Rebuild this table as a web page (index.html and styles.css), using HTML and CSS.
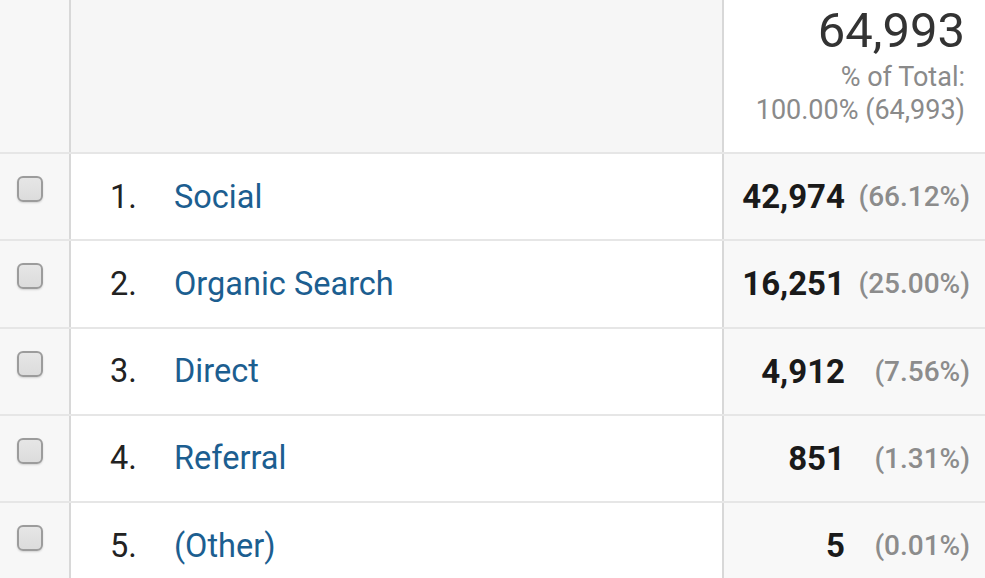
FILE: index.html
```html
<!DOCTYPE html>
<html lang="en">
<head>
    <meta charset="UTF-8">
    <meta name="viewport" content="width=device-width, initial-scale=1.0">
    <title>Channels</title>
    <link rel="stylesheet" href="styles.css">
</head>
<body>
    <div class="report">
        <div class="row head">
            <div class="cell check"></div>
            <div class="cell dim"></div>
            <div class="cell metric">
                <div class="total">64,993</div>
                <div class="total-sub">% of Total:<br>100.00% (64,993)</div>
            </div>
        </div>

        <div class="row">
            <div class="cell check"><span class="box"></span></div>
            <div class="cell dim"><span class="num">1.</span><a href="#" class="link">Social</a></div>
            <div class="cell metric"><span class="value">42,974</span><span class="pct">(66.12%)</span></div>
        </div>

        <div class="row">
            <div class="cell check"><span class="box"></span></div>
            <div class="cell dim"><span class="num">2.</span><a href="#" class="link">Organic Search</a></div>
            <div class="cell metric"><span class="value">16,251</span><span class="pct">(25.00%)</span></div>
        </div>

        <div class="row">
            <div class="cell check"><span class="box"></span></div>
            <div class="cell dim"><span class="num">3.</span><a href="#" class="link">Direct</a></div>
            <div class="cell metric"><span class="value">4,912</span><span class="pct">(7.56%)</span></div>
        </div>

        <div class="row">
            <div class="cell check"><span class="box"></span></div>
            <div class="cell dim"><span class="num">4.</span><a href="#" class="link">Referral</a></div>
            <div class="cell metric"><span class="value">851</span><span class="pct">(1.31%)</span></div>
        </div>

        <div class="row">
            <div class="cell check"><span class="box"></span></div>
            <div class="cell dim"><span class="num">5.</span><a href="#" class="link">(Other)</a></div>
            <div class="cell metric"><span class="value">5</span><span class="pct">(0.01%)</span></div>
        </div>
    </div>
</body>
</html>
```

FILE: styles.css
```css
body {
    margin: 0;
    background-color: #fff;
    font-family: Roboto, 'Liberation Sans', sans-serif;
    overflow: hidden;
}
.report {
    width: 985px;
}
.row {
    display: grid;
    grid-template-columns: 71px 653px 1fr;
    height: 87.25px;
    border-bottom: 2px solid #e6e6e6;
    box-sizing: border-box;
}
.row.head {
    height: 154px;
}
.cell {
    box-sizing: border-box;
}
.check {
    border-right: 2px solid #d8d8d8;
    background-color: #f7f7f7;
    padding: 22px 0 0 17px;
}
.dim {
    border-right: 2px solid #d8d8d8;
    background-color: #fff;
    display: flex;
    align-items: center;
    padding-left: 39px;
    font-size: 32.5px;
}
.head .dim {
    background-color: #f6f6f6;
}
.metric {
    background-color: #f8f8f8;
    display: flex;
    align-items: center;
    justify-content: flex-end;
    padding-right: 15px;
}
.head .metric {
    background-color: #fff;
    display: block;
    text-align: right;
    padding: 6px 20px 0 0;
}
.total {
    font-size: 49px;
    line-height: 50px;
    color: #333;
}
.total-sub {
    margin-top: 5px;
    font-size: 27px;
    line-height: 33px;
    color: #8a8a8a;
}
.box {
    display: block;
    width: 26px;
    height: 26px;
    box-sizing: border-box;
    border: 2px solid #9c9c9c;
    border-radius: 6px;
    background: linear-gradient(#e6e6e6, #dcdcdc);
    box-shadow: 0 1px 2px rgba(0, 0, 0, 0.15);
}
.num {
    width: 64px;
    color: #222;
}
.link {
    color: #1c5e90;
    text-decoration: none;
}
.value {
    font-size: 33px;
    font-weight: bold;
    color: #1a1a1a;
}
.pct {
    width: 112px;
    margin-left: 13px;
    text-align: right;
    font-size: 28px;
    font-weight: 500;
    color: #8c8c8c;
}
```
